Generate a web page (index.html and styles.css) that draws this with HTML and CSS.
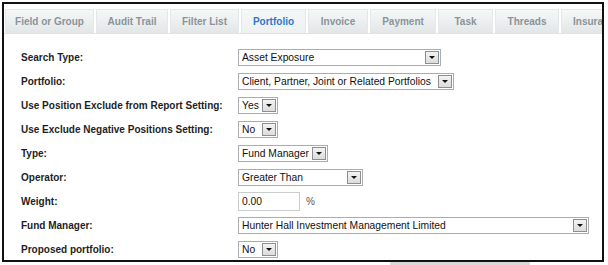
FILE: index.html
```html
<!DOCTYPE html>
<html>
<head>
<meta charset="utf-8">
<link rel="stylesheet" href="styles.css">
</head>
<body>
<div class="frame">
  <div class="tabs">
    <div class="tab t1">Field or Group</div>
    <div class="tab t2">Audit Trail</div>
    <div class="tab t3">Filter List</div>
    <div class="tab t4 active">Portfolio</div>
    <div class="tab t5">Invoice</div>
    <div class="tab t6">Payment</div>
    <div class="tab t7">Task</div>
    <div class="tab t8">Threads</div>
    <div class="tab t9">Insurance</div>
  </div>
  <div class="form">
    <div class="row">
      <div class="label">Search Type:</div>
      <div class="select s-asset"><span class="val">Asset Exposure</span><span class="btn"></span></div>
    </div>
    <div class="row">
      <div class="label">Portfolio:</div>
      <div class="select s-port"><span class="val">Client, Partner, Joint or Related Portfolios</span><span class="btn"></span></div>
    </div>
    <div class="row">
      <div class="label">Use Position Exclude from Report Setting:</div>
      <div class="select s-small"><span class="val">Yes</span><span class="btn"></span></div>
    </div>
    <div class="row">
      <div class="label">Use Exclude Negative Positions Setting:</div>
      <div class="select s-small"><span class="val">No</span><span class="btn"></span></div>
    </div>
    <div class="row">
      <div class="label">Type:</div>
      <div class="select s-type"><span class="val">Fund Manager</span><span class="btn"></span></div>
    </div>
    <div class="row">
      <div class="label">Operator:</div>
      <div class="select s-op"><span class="val">Greater Than</span><span class="btn"></span></div>
    </div>
    <div class="row">
      <div class="label">Weight:</div>
      <div class="weight"><div class="input">0.00</div><span class="pct">%</span></div>
    </div>
    <div class="row">
      <div class="label">Fund Manager:</div>
      <div class="select s-fm"><span class="val">Hunter Hall Investment Management Limited</span><span class="btn"></span></div>
    </div>
    <div class="row">
      <div class="label">Proposed portfolio:</div>
      <div class="select s-small"><span class="val">No</span><span class="btn"></span></div>
    </div>
  </div>
</div>
<div class="scrollbit"></div>
</body>
</html>
```
FILE: styles.css
```css
html, body {
  margin: 0;
  padding: 0;
  background: #fff;
}
body {
  font-family: "Liberation Sans", Arial, sans-serif;
  width: 608px;
  height: 265px;
  overflow: hidden;
}
.frame {
  margin: 2px 0 0 2px;
  width: 598px;
  height: 256px;
  border: 2px solid #111;
  overflow: hidden;
  background: #fff;
}
.tabs {
  display: flex;
  gap: 2px;
  padding: 5px 0 0 1px;
  height: 24px;
  border-bottom: 1px solid #dfe3e5;
  white-space: nowrap;
}
.tab {
  flex-shrink: 0;
  height: 24px;
  box-sizing: border-box;
  display: flex;
  align-items: center;
  justify-content: center;
  font-size: 10px;
  font-weight: bold;
  color: #8a949a;
  background: linear-gradient(#f6f8f8, #e2e6e7);
  border: 1px solid #e4e8ea;
  border-bottom: none;
}
.tab.active {
  color: #2c78c6;
  background: linear-gradient(#f4f6f7, #eef1f2);
}
.t1 { width: 89px; }
.t2 { width: 72px; }
.t3 { width: 69px; }
.t4 { width: 65px; }
.t5 { width: 60px; }
.t6 { width: 66px; }
.t7 { width: 55px; }
.t8 { width: 64px; }
.t9 { width: 60px; justify-content: flex-start; padding-left: 11px; }
.form {
  padding: 11px 0 0 17px;
}
.row {
  display: flex;
  align-items: center;
  height: 24px;
}
.label {
  width: 217px;
  flex-shrink: 0;
  font-size: 10px;
  font-weight: bold;
  color: #1e1e1e;
}
.select {
  box-sizing: border-box;
  height: 17px;
  display: flex;
  align-items: center;
  justify-content: space-between;
  border: 1px solid #a8adb1;
  padding: 0 1px 0 3px;
  background: #fff;
  font-size: 10.3px;
  color: #111;
  white-space: nowrap;
}
.btn {
  position: relative;
  box-sizing: border-box;
  width: 14px;
  height: 13px;
  flex-shrink: 0;
  border: 1px solid #8c8f92;
  background: linear-gradient(#f3f3f3, #dcdcdc);
}
.btn::after {
  content: "";
  position: absolute;
  left: 3px;
  top: 4px;
  border-left: 3px solid transparent;
  border-right: 3px solid transparent;
  border-top: 3px solid #111;
}
.s-asset { width: 203px; }
.s-port { width: 216px; }
.s-small { width: 40px; }
.s-type { width: 90px; }
.s-op { width: 125px; }
.s-fm { width: 351px; }
.weight {
  display: flex;
  align-items: center;
}
.input {
  box-sizing: border-box;
  width: 62px;
  height: 19px;
  border: 1px solid #c9cdd0;
  padding: 0 3px;
  display: flex;
  align-items: center;
  font-size: 10.3px;
  color: #111;
}
.pct {
  margin-left: 6px;
  font-size: 10px;
  color: #555;
}
.scrollbit {
  margin: 0 0 0 390px;
  width: 140px;
  height: 3px;
  background: #dadada;
}
```
